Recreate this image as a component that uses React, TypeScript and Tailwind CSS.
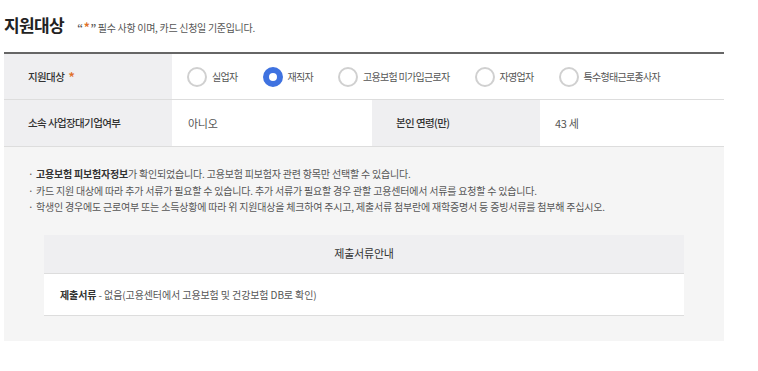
import React from "react";

const font = { fontFamily: '"Noto Sans CJK KR", "Noto Sans", sans-serif' };

function Radio({ label, checked }: { label: string; checked?: boolean }) {
  return (
    <label className="flex items-center gap-[5px] mr-[25px]">
      {checked ? (
        <span className="w-[20px] h-[20px] rounded-full border-[6px] border-[#3f72e0] bg-white box-border" />
      ) : (
        <span className="w-[20px] h-[20px] rounded-full border-2 border-[#d0d0d0] bg-white box-border" />
      )}
      <span className="text-[10px] tracking-[-0.7px] text-[#555]">{label}</span>
    </label>
  );
}

export default function App() {
  return (
    <div className="bg-white w-[758px] h-[371px] text-[#333]" style={font}>
      <div className="pl-[4px] w-[724px]">
        <div className="flex items-end h-[40px] pb-[3px]">
          <h2 className="text-[17px] font-bold text-[#222] leading-[24px] tracking-[-0.6px]">지원대상</h2>
          <p className="ml-[13px] text-[10px] text-[#555] leading-[18px] tracking-[-0.3px]">
            <span className="font-bold">“</span>
            <span className="text-[#e0702a] font-bold text-[12px] mx-[1px]">*</span>
            <span className="font-bold">”</span> 필수 사항 이며, 카드 신청일 기준입니다.
          </p>
        </div>
        <div className="mt-[12px] border-t-2 border-[#666]">
          <div className="flex h-[46px] border-b border-[#ddd]">
            <div className="w-[168px] bg-[#efeff1] flex items-center pl-[24px] text-[10.5px] font-medium tracking-[-0.6px] text-[#333]">
              지원대상 <span className="text-[#e0702a] ml-[4px] text-[14px] leading-none">*</span>
            </div>
            <div className="flex-1 flex items-center pl-[15px]">
              <Radio label="실업자" />
              <Radio label="재직자" checked />
              <Radio label="고용보험 미가입근로자" />
              <Radio label="자영업자" />
              <Radio label="특수형태근로종사자" />
            </div>
          </div>
          <div className="flex h-[47px] border-b border-[#ddd]">
            <div className="w-[168px] bg-[#efeff1] flex items-center pl-[24px] text-[10.5px] font-medium tracking-[-0.6px] text-[#333]">
              소속 사업장대기업여부
            </div>
            <div className="w-[200px] flex items-center pl-[16px] text-[11px] tracking-[-0.3px] text-[#555]">아니오</div>
            <div className="w-[168px] bg-[#efeff1] flex items-center pl-[24px] text-[10.5px] font-medium tracking-[-0.6px] text-[#333]">
              본인 연령(만)
            </div>
            <div className="flex-1 flex items-center pl-[15px] text-[11px] tracking-[-0.3px] text-[#555]">43 세</div>
          </div>
          <div className="bg-[#f5f5f5] pt-[19px] pb-[25px] px-[40px]">
            <ul className="text-[10px] leading-[16.5px] text-[#555] -ml-[16px] tracking-[-0.2px]">
              <li className="flex">
                <span className="w-[8px]">·</span>
                <span>
                  <b className="text-[#333]">고용보험 피보험자정보</b>가 확인되었습니다. 고용보험 피보험자 관련 항목만 선택할 수 있습니다.
                </span>
              </li>
              <li className="flex">
                <span className="w-[8px]">·</span>
                <span>카드 지원 대상에 따라 추가 서류가 필요할 수 있습니다. 추가 서류가 필요할 경우 관할 고용센터에서 서류를 요청할 수 있습니다.</span>
              </li>
              <li className="flex">
                <span className="w-[8px]">·</span>
                <span>학생인 경우에도 근로여부 또는 소득상황에 따라 위 지원대상을 체크하여 주시고, 제출서류 첨부란에 재학증명서 등 증빙서류를 첨부해 주십시오.</span>
              </li>
            </ul>
            <div className="mt-[19px]">
              <div className="h-[39px] bg-[#efeff1] border-b border-[#ddd] flex items-center justify-center text-[11px] tracking-[-0.2px] text-[#333]">
                제출서류안내
              </div>
              <div className="h-[42px] bg-white border-b border-[#ddd] flex items-center pl-[16px] text-[10px] tracking-[-0.1px] text-[#555]">
                <b className="text-[#333]">제출서류</b>&nbsp;- 없음(고용센터에서 고용보험 및 건강보험 DB로 확인)
              </div>
            </div>
          </div>
        </div>
      </div>
    </div>
  );
}
